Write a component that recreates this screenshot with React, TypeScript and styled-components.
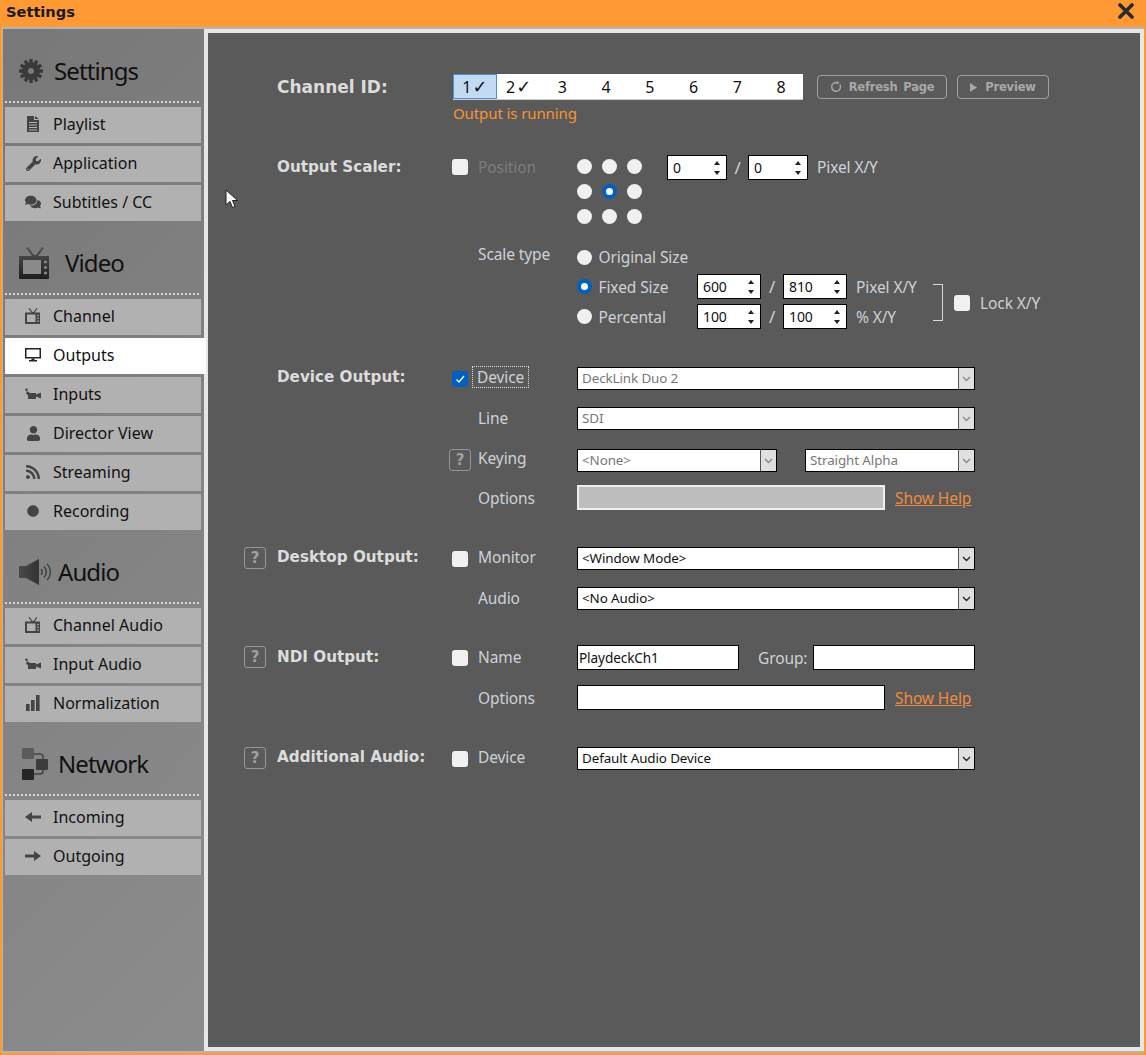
import React from "react";
import styled, { createGlobalStyle } from "styled-components";
import { FaWrench, FaComments, FaUser, FaRss, FaCircle } from "react-icons/fa";

const GlobalStyle = createGlobalStyle`
  html, body { margin: 0; padding: 0; background: #ff9933; }
  body { font-family: "Noto Sans", "Open Sans", sans-serif; }
`;

const Window = styled.div`
  position: relative;
  width: 1146px;
  height: 1055px;
  background: #ff9933;
  display: flex;
  flex-direction: column;
  overflow: hidden;
`;

const TitleBar = styled.div`
  height: 27px;
  display: flex;
  align-items: center;
  justify-content: space-between;
  padding: 0 12px 5px 6px;
  box-sizing: border-box;
  font: bold 14.6px "DejaVu Sans", sans-serif;
  color: #1a1a1a;
`;

const Body = styled.div`
  display: flex;
  height: 1022px;
  margin: 0 2px 2px 2px;
  border-top: 2px solid #b4b4b4;
  border-bottom: 2px solid #b4b4b4;
  box-sizing: content-box;
`;

const Sidebar = styled.div`
  width: 202px;
  flex: none;
  box-sizing: border-box;
  padding-left: 2px;
  background: linear-gradient(135deg, #787878, #8c8c8c);
  border-left: 1px solid #b4b4b4;
`;

const Heading = styled.div<{ $left?: number }>`
  height: 72px;
  box-sizing: border-box;
  padding: 12px 0 0 ${(p) => p.$left ?? 14}px;
  display: flex;
  align-items: center;
  color: #111;
  font-size: 24px;
  letter-spacing: -0.9px;
`;

const HeadLabel = styled.span`
  margin-top: -2px;
`;

const HeadIcon = styled.span<{ $gap: number }>`
  display: flex;
  margin-right: ${(p) => p.$gap}px;
  color: #333;
`;

const Dotted = styled.div`
  height: 2px;
  margin-right: 3px;
  margin-bottom: 4px;
  background-image: repeating-linear-gradient(90deg, #d8d8d8 0 2px, transparent 2px 4px);
`;

const Item = styled.div<{ $active?: boolean }>`
  height: 36px;
  margin-bottom: 3px;
  box-sizing: border-box;
  width: ${(p) => (p.$active ? 201 : 196)}px;
  background: ${(p) => (p.$active ? "#fff" : "#b1b1b1")};
  display: flex;
  align-items: center;
  padding: 0 0 2px 20px;
  font-size: 16px;
  color: #111;
  position: relative;

  &:last-child {
    margin-bottom: 0;
  }
`;

const ItemIcon = styled.span`
  width: 16px;
  height: 16px;
  margin-right: 12px;
  display: flex;
  align-items: center;
  justify-content: center;
  color: #444;
`;

const Panel = styled.div`
  flex: 1;
  border: 4px solid #e6e6e6;
  background: #5a5a5a;
  padding: 41px 0 0 36px;
  box-sizing: border-box;
  color: #ccd2d8;
  font-size: 15.5px;
  letter-spacing: -0.1px;
`;

const Row = styled.div<{ $h?: number; $top?: number }>`
  display: flex;
  align-items: center;
  height: ${(p) => p.$h ?? 23}px;
  margin-top: ${(p) => p.$top ?? 0}px;
`;

const HelpSlot = styled.div`
  width: 33px;
  flex: none;
`;

const Title = styled.div<{ $pad?: number }>`
  width: 176px;
  flex: none;
  padding-bottom: ${(p) => p.$pad ?? 4}px;
  font: bold 15.2px "DejaVu Sans", sans-serif;
  letter-spacing: 0;
  color: #dcdcdc;
`;

const BigTitle = styled(Title)`
  font-size: 17px;
`;

const CheckSlot = styled.div`
  width: 25px;
  flex: none;
  display: flex;
`;

const Sub = styled.div<{ $muted?: boolean; $raise?: number }>`
  width: 99px;
  flex: none;
  margin-top: ${(p) => -(p.$raise ?? 0)}px;
  color: ${(p) => (p.$muted ? "#7c7c7c" : "#ccd2d8")};
`;

const Focused = styled.span`
  display: inline-block;
  margin-left: -5px;
  padding: 0 4px;
  line-height: 20px;
  outline: 1px dotted #ddd;
`;

const Help = styled.div<{ $shift?: boolean }>`
  width: 22px;
  height: 22px;
  box-sizing: border-box;
  border: 1px solid #969696;
  border-radius: 3px;
  margin: ${(p) => (p.$shift ? "-2px 0 0 -4px" : "-2px 0 0 0")};
  display: flex;
  align-items: center;
  justify-content: center;
  color: #a0a0a0;
  font: bold 15px "DejaVu Sans", sans-serif;
`;

const Check = styled.div<{ $on?: boolean }>`
  width: 16px;
  height: 16px;
  margin-left: -1px;
  border-radius: 3px;
  background: ${(p) => (p.$on ? "#0060c0" : "#f0f0f0")};
  display: flex;
  align-items: center;
  justify-content: center;
`;

const Strip = styled.div`
  width: 350px;
  height: 26px;
  display: grid;
  grid-template-columns: repeat(8, 1fr);
  background: #fff;
  border-bottom: 1px solid #ccc;
  box-sizing: border-box;
  color: #111;
  font-size: 16px;
`;

const Cell = styled.div<{ $on?: boolean }>`
  display: flex;
  align-items: center;
  justify-content: center;
  box-sizing: border-box;
  background: ${(p) => (p.$on ? "#c3daf3" : "transparent")};
  border: ${(p) => (p.$on ? "1px solid #4a90d9" : "none")};
`;

const Tick = styled.span`
  font: 18px "DejaVu Sans", sans-serif;
  margin-left: 1px;
`;

const TopButton = styled.div<{ $w: number; $left: number }>`
  width: ${(p) => p.$w}px;
  margin-left: ${(p) => p.$left}px;
  height: 24px;
  box-sizing: border-box;
  border: 1px solid #a0a0a0;
  border-radius: 4px;
  display: flex;
  align-items: center;
  justify-content: center;
  gap: 7px;
  color: #a8a8a8;
  font: bold 11.5px "DejaVu Sans", sans-serif;
  letter-spacing: -0.2px;
  word-spacing: 2px;
`;

const Status = styled.div`
  height: 28px;
  line-height: 27px;
  padding-left: 209px;
  font-size: 15px;
  color: #f59532;
`;

const ScalerRow = styled.div`
  display: flex;
  margin-top: 27px;
  height: 69px;
`;

const ScalerCell = styled.div`
  height: 24px;
  display: flex;
  align-items: center;
`;

const Dots = styled.div`
  display: grid;
  grid-template-columns: repeat(3, 15px);
  grid-auto-rows: 15px;
  gap: 10px;
  margin-top: 4px;
  height: 65px;
`;

const Radio = styled.div<{ $on?: boolean }>`
  width: 15px;
  height: 15px;
  flex: none;
  box-sizing: border-box;
  border-radius: 50%;
  background: ${(p) => (p.$on ? "#fff" : "#f0f0f0")};
  border: ${(p) => (p.$on ? "4px solid #0060c0" : "none")};
`;

const Spin = styled.div<{ $w: number; $left?: number }>`
  position: relative;
  width: ${(p) => p.$w}px;
  height: 25px;
  margin-left: ${(p) => p.$left ?? 0}px;
  flex: none;
  box-sizing: border-box;
  border: 1px solid #000;
  background: #fff;
  color: #111;
  font-size: 14px;
  line-height: 23px;
  padding-left: 5px;
`;

const SpinUp = styled.i`
  position: absolute;
  right: 6px;
  top: 5px;
  border: 3px solid transparent;
  border-top: 0;
  border-bottom: 4px solid #222;
`;

const SpinDown = styled(SpinUp)`
  top: auto;
  bottom: 4px;
  border-bottom: 0;
  border-top: 4px solid #222;
`;

const Slash = styled.span<{ $w: number }>`
  width: ${(p) => p.$w}px;
  flex: none;
  text-align: center;
  font-size: 17px;
`;

const ScaleBlock = styled.div`
  display: flex;
  margin-top: 22px;
  height: 83px;
`;

const ScaleLabel = styled(Sub)`
  line-height: 16px;
`;

const Spacer = styled.div`
  width: 234px;
  flex: none;
`;

const ScaleRows = styled.div`
  width: 356px;
  flex: none;
`;

const ScaleRow = styled.div<{ $h: number; $top?: number }>`
  display: flex;
  align-items: center;
  height: ${(p) => p.$h}px;
  margin-top: ${(p) => p.$top ?? 0}px;
`;

const RadioText = styled.span`
  width: 105px;
  flex: none;
  padding-left: 6.5px;
  box-sizing: border-box;
  white-space: nowrap;
`;

const Unit = styled.span`
  margin-left: 9px;
`;

const Lock = styled.div`
  display: flex;
  align-items: center;
  margin-top: 38px;
  height: 37px;
`;

const Bracket = styled.div`
  width: 10px;
  height: 37px;
  box-sizing: border-box;
  border: 1px solid #d8d8d8;
  border-left: 0;
  margin-right: 12px;
`;

const LockText = styled.span`
  margin-left: 10px;
`;

const Select = styled.div<{ $w: number; $off?: boolean; $left?: number }>`
  width: ${(p) => p.$w}px;
  height: 23px;
  margin-left: ${(p) => p.$left ?? 0}px;
  flex: none;
  box-sizing: border-box;
  border: 1px solid #000;
  background: #fff;
  color: ${(p) => (p.$off ? "#777" : "#111")};
  font-size: 13.4px;
  line-height: 21px;
  padding-left: 4px;
  position: relative;
`;

const Arrow = styled.span<{ $off?: boolean }>`
  position: absolute;
  right: 0;
  top: 0;
  bottom: 0;
  width: 15px;
  background: #e0e0e0;
  border-left: 1px solid #555;
  display: flex;
  align-items: center;
  justify-content: center;
  color: ${(p) => (p.$off ? "#888" : "#222")};
`;

const TextBox = styled.div<{ $w: number; $off?: boolean }>`
  width: ${(p) => p.$w}px;
  height: 25px;
  flex: none;
  box-sizing: border-box;
  border: ${(p) => (p.$off ? "2px solid #eee" : "1px solid #000")};
  background: ${(p) => (p.$off ? "#bdbdbd" : "#fff")};
  color: #111;
  font-size: 13.6px;
  line-height: 23px;
  padding-left: 1px;
`;

const HelpLink = styled.span`
  margin-left: 10px;
  color: #f08a3c;
  text-decoration: underline;
`;

const GroupLabel = styled.span`
  width: 74px;
  flex: none;
  box-sizing: border-box;
  padding-left: 19px;
`;

const PositionedCursor = styled.svg`
  position: absolute;
  left: 225px;
  top: 189px;
`;

const GearIcon = () => (
  <svg width="24" height="24" viewBox="0 0 24 24" fill="#3a3a3a">
    {[0, 30, 60, 90, 120, 150, 180, 210, 240, 270, 300, 330].map((a) => (
      <rect key={a} x="10.300" y="0" width="3.400" height="5" rx="0.600" transform={`rotate(${a} 12 12)`} />
    ))}
    <path
      fillRule="evenodd"
      d="M12 3a9 9 0 1 1 0 18 9 9 0 0 1 0-18zm0 6a3 3 0 1 0 0 6 3 3 0 0 0 0-6z"
    />
  </svg>
);

const TvIcon = ({ size = 16 }: { size?: number }) => (
  <svg width={size} height={size} viewBox="0 0 32 32" fill="currentColor">
    <path d="M7 1l2-1 6 8h2l6-8 2 1-6 8h11v22a1 1 0 0 1-1 1H1a1 1 0 0 1-1-1V9h13z" />
    <rect x="4" y="13" width="17" height="15" fill="#b1b1b1" />
    <circle cx="26" cy="15" r="1.7" fill="#b1b1b1" />
    <circle cx="26" cy="20.5" r="1.7" fill="#b1b1b1" />
    <circle cx="26" cy="26" r="1.7" fill="#b1b1b1" />
  </svg>
);

const HeadTv = () => (
  <svg width="32" height="32" viewBox="0 0 32 32">
    <defs>
      <linearGradient id="tvg" x1="0" y1="0" x2="0" y2="1">
        <stop offset="0" stopColor="#555" />
        <stop offset="1" stopColor="#1e1e1e" />
      </linearGradient>
    </defs>
    <path fill="url(#tvg)" d="M7 1l2-1 6 8h2l6-8 2 1-6 8h11v22a1 1 0 0 1-1 1H1a1 1 0 0 1-1-1V9h13z" />
    <rect x="4" y="13" width="18" height="14" fill="#8a8a8a" />
    <circle cx="26.5" cy="15" r="1.6" fill="#888" />
    <circle cx="26.5" cy="20.5" r="1.6" fill="#888" />
    <circle cx="26.5" cy="26" r="1.6" fill="#888" />
  </svg>
);

const FileIcon = () => (
  <svg width="12" height="16" viewBox="0 0 12 16" fill="currentColor">
    <path d="M0 0h7v4h5v12H0zM8 0l4 3H8z" />
    <path d="M2 6.5h8M2 9h8M2 11.500h8M2 14h8" stroke="#b1b1b1" strokeWidth="1" />
  </svg>
);

const MonitorIcon = () => (
  <svg width="16" height="16" viewBox="0 0 16 16" fill="#222">
    <path fillRule="evenodd" d="M0 1h16v10.500H0zM1.500 2.500v7.500h13V2.500z" />
    <path d="M6.500 11.500h3V13h2.500v1.500H4V13h2.500z" />
  </svg>
);

const CameraIcon = () => (
  <svg width="16" height="12" viewBox="0 0 16 12" fill="currentColor">
    <circle cx="1.500" cy="1.800" r="1.300" />
    <path d="M2 3l3 2h6v1.500l5-2v6l-5-2V11H3V7L1 6z" />
  </svg>
);

const BarsIcon = () => (
  <svg width="14" height="16" viewBox="0 0 14 16" fill="currentColor">
    <rect x="0" y="9" width="3.600" height="7" />
    <rect x="5" y="5" width="3.600" height="11" />
    <rect x="10" y="0" width="3.600" height="16" />
  </svg>
);

const ArrowIcon = ({ flip }: { flip?: boolean }) => (
  <svg width="16" height="10" viewBox="0 0 16 10" fill="currentColor">
    <path d={flip ? "M0 3.500h9V0l7 5-7 5V6.500H0z" : "M16 3.500H7V0L0 5l7 5V6.500h9z"} />
  </svg>
);

const SpeakerIcon = () => (
  <svg width="32" height="26" viewBox="0 0 32 26">
    <defs>
      <linearGradient id="spk" x1="0" y1="0" x2="1" y2="0">
        <stop offset="0" stopColor="#4a4a4a" />
        <stop offset="1" stopColor="#333" />
      </linearGradient>
    </defs>
    <path fill="url(#spk)" d="M0 7h7l13-7v26L7 19H0z" />
    <path d="M22 10c1.500 1.500 1.500 4.500 0 6M25 7.500c3 3 3 8 0 11M28 5c4.500 4 4.500 12 0 16" fill="none" stroke="#444" strokeWidth="1.600" />
  </svg>
);

const NetworkIcon = () => (
  <svg width="26" height="32" viewBox="0 0 26 32">
    <path d="M12 6h6a3 3 0 0 1 3 3v3M12 26h6a3 3 0 0 0 3-3v-3" fill="none" stroke="#444" strokeWidth="1.500" />
    <rect x="0" y="0" width="12" height="11" rx="1" fill="#5c5c5c" />
    <rect x="14" y="11" width="12" height="11" rx="1" fill="#3c3c3c" />
    <rect x="0" y="21" width="12" height="11" rx="1" fill="#262626" />
  </svg>
);

const CheckMark = () => (
  <svg width="10" height="10" viewBox="0 0 10 10">
    <path d="M1.500 5.500l2.500 2.500 5-6" fill="none" stroke="#fff" strokeWidth="1.200" />
  </svg>
);

const Chevron = () => (
  <svg width="9" height="6" viewBox="0 0 9 6">
    <path d="M1 1l3.500 3.500L8 1" fill="none" stroke="currentColor" strokeWidth="1.400" />
  </svg>
);

const CloseIcon = () => (
  <svg width="16" height="16" viewBox="0 0 16 16">
    <path d="M2 2l12 12M14 2L2 14" stroke="#2a2a2a" strokeWidth="3.600" strokeLinecap="round" />
  </svg>
);

const RefreshIcon = () => (
  <svg width="12" height="12" viewBox="0 0 12 12">
    <path d="M9.800 3.500a4.400 4.400 0 1 1-2.300-1.800" fill="none" stroke="#a8a8a8" strokeWidth="1.500" />
    <path d="M6.500 0l3 1.800-3 1.800z" fill="#a8a8a8" />
  </svg>
);

const PlayIcon = () => (
  <svg width="8" height="9" viewBox="0 0 8 9">
    <path d="M0 0l7 4.500L0 9z" fill="#a8a8a8" />
  </svg>
);

const menu: { head: string; icon: React.ReactNode; left?: number; gap: number; items: [string, React.ReactNode][] }[] = [
  {
    head: "Settings",
    icon: <GearIcon />,
    gap: 11,
    items: [
      ["Playlist", <FileIcon />],
      ["Application", <FaWrench size={15} />],
      ["Subtitles / CC", <FaComments size={16} />],
    ],
  },
  {
    head: "Video",
    icon: <HeadTv />,
    gap: 14,
    items: [
      ["Channel", <TvIcon />],
      ["Outputs", <MonitorIcon />],
      ["Inputs", <CameraIcon />],
      ["Director View", <FaUser size={15} />],
      ["Streaming", <FaRss size={16} />],
      ["Recording", <FaCircle size={12} />],
    ],
  },
  {
    head: "Audio",
    icon: <SpeakerIcon />,
    gap: 7,
    items: [
      ["Channel Audio", <TvIcon />],
      ["Input Audio", <CameraIcon />],
      ["Normalization", <BarsIcon />],
    ],
  },
  {
    head: "Network",
    icon: <NetworkIcon />,
    left: 17,
    gap: 10,
    items: [
      ["Incoming", <ArrowIcon />],
      ["Outgoing", <ArrowIcon flip />],
    ],
  },
];

const channels = [
  { n: "1", done: true },
  { n: "2", done: true },
  { n: "3" },
  { n: "4" },
  { n: "5" },
  { n: "6" },
  { n: "7" },
  { n: "8" },
];

const SpinBox = ({ value, w, left }: { value: string; w: number; left?: number }) => (
  <Spin $w={w} $left={left}>
    {value}
    <SpinUp />
    <SpinDown />
  </Spin>
);

const Drop = ({ text, w, off, left }: { text: string; w: number; off?: boolean; left?: number }) => (
  <Select $w={w} $off={off} $left={left}>
    {text}
    <Arrow $off={off}>
      <Chevron />
    </Arrow>
  </Select>
);

const App = () => {
  return (
    <Window>
      <GlobalStyle />
      <TitleBar>
        Settings
        <CloseIcon />
      </TitleBar>
      <Body>
        <Sidebar>
          {menu.map((group) => (
            <div key={group.head}>
              <Heading $left={group.left}>
                <HeadIcon $gap={group.gap}>{group.icon}</HeadIcon>
                <HeadLabel>{group.head}</HeadLabel>
              </Heading>
              <Dotted />
              {group.items.map(([label, icon]) => (
                <Item key={label} $active={label === "Outputs"}>
                  <ItemIcon>{icon}</ItemIcon>
                  {label}
                </Item>
              ))}
            </div>
          ))}
        </Sidebar>

        <Panel>
          <Row $h={26}>
            <HelpSlot />
            <BigTitle $pad={1}>Channel ID:</BigTitle>
            <Strip>
              {channels.map((c, i) => (
                <Cell key={c.n} $on={i === 0}>
                  {c.n}
                  {c.done && <Tick>✓</Tick>}
                </Cell>
              ))}
            </Strip>
            <TopButton $w={130} $left={14}>
              <RefreshIcon />
              Refresh Page
            </TopButton>
            <TopButton $w={92} $left={10}>
              <PlayIcon />
              Preview
            </TopButton>
          </Row>
          <Status>Output is running</Status>

          <ScalerRow>
            <HelpSlot />
            <Title as={ScalerCell} $pad={2}>
              Output Scaler:
            </Title>
            <CheckSlot as={ScalerCell}>
              <Check />
            </CheckSlot>
            <Sub as={ScalerCell} $muted>
              Position
            </Sub>
            <Dots>
              {[0, 1, 2, 3, 4, 5, 6, 7, 8].map((n) => (
                <Radio key={n} $on={n === 4} />
              ))}
            </Dots>
            <ScalerCell>
              <SpinBox value="0" w={60} left={25} />
              <Slash $w={21}>/</Slash>
              <SpinBox value="0" w={60} />
              <Unit>Pixel X/Y</Unit>
            </ScalerCell>
          </ScalerRow>

          <ScaleBlock>
            <Spacer />
            <ScaleLabel>Scale type</ScaleLabel>
            <ScaleRows>
              <ScaleRow $h={22}>
                <Radio />
                <RadioText>Original Size</RadioText>
              </ScaleRow>
              <ScaleRow $h={25} $top={6}>
                <Radio $on />
                <RadioText>Fixed Size</RadioText>
                <SpinBox value="600" w={64} />
                <Slash $w={22}>/</Slash>
                <SpinBox value="810" w={64} />
                <Unit>Pixel X/Y</Unit>
              </ScaleRow>
              <ScaleRow $h={25} $top={5}>
                <Radio />
                <RadioText>Percental</RadioText>
                <SpinBox value="100" w={64} />
                <Slash $w={22}>/</Slash>
                <SpinBox value="100" w={64} />
                <Unit>% X/Y</Unit>
              </ScaleRow>
            </ScaleRows>
            <Lock>
              <Bracket />
              <Check />
              <LockText>Lock X/Y</LockText>
            </Lock>
          </ScaleBlock>

          <Row $top={38}>
            <HelpSlot />
            <Title>Device Output:</Title>
            <CheckSlot>
              <Check $on>
                <CheckMark />
              </Check>
            </CheckSlot>
            <Sub $raise={3}>
              <Focused>Device</Focused>
            </Sub>
            <Drop text="DeckLink Duo 2" w={398} off />
          </Row>
          <Row $top={17}>
            <HelpSlot />
            <Title />
            <CheckSlot />
            <Sub $raise={2}>Line</Sub>
            <Drop text="SDI" w={398} off />
          </Row>
          <Row $top={19}>
            <HelpSlot />
            <Title />
            <CheckSlot>
              <Help $shift>?</Help>
            </CheckSlot>
            <Sub $raise={5}>Keying</Sub>
            <Drop text="<None>" w={200} off />
            <Drop text="Straight Alpha" w={170} off left={28} />
          </Row>
          <Row $h={25} $top={13}>
            <HelpSlot />
            <Title />
            <CheckSlot />
            <Sub>Options</Sub>
            <TextBox $w={308} $off />
            <HelpLink>Show Help</HelpLink>
          </Row>

          <Row $top={37}>
            <HelpSlot>
              <Help>?</Help>
            </HelpSlot>
            <Title>Desktop Output:</Title>
            <CheckSlot>
              <Check />
            </CheckSlot>
            <Sub $raise={4}>Monitor</Sub>
            <Drop text="<Window Mode>" w={398} />
          </Row>
          <Row $top={17}>
            <HelpSlot />
            <Title />
            <CheckSlot />
            <Sub $raise={2}>Audio</Sub>
            <Drop text="<No Audio>" w={398} />
          </Row>

          <Row $h={25} $top={35}>
            <HelpSlot>
              <Help>?</Help>
            </HelpSlot>
            <Title $pad={2}>NDI Output:</Title>
            <CheckSlot>
              <Check />
            </CheckSlot>
            <Sub $raise={2}>Name</Sub>
            <TextBox $w={162}>PlaydeckCh1</TextBox>
            <GroupLabel>Group:</GroupLabel>
            <TextBox $w={162} />
          </Row>
          <Row $h={25} $top={15}>
            <HelpSlot />
            <Title />
            <CheckSlot />
            <Sub>Options</Sub>
            <TextBox $w={308} />
            <HelpLink>Show Help</HelpLink>
          </Row>

          <Row $top={37}>
            <HelpSlot>
              <Help>?</Help>
            </HelpSlot>
            <Title>Additional Audio:</Title>
            <CheckSlot>
              <Check />
            </CheckSlot>
            <Sub $raise={4}>Device</Sub>
            <Drop text="Default Audio Device" w={398} />
          </Row>
        </Panel>
      </Body>
      <PositionedCursor width="13" height="20" viewBox="0 0 13 20">
        <path d="M1 1v15l4-3.500 2.500 6 2.500-1-2.500-6H12.500z" fill="#fff" stroke="#222" strokeWidth="1" />
      </PositionedCursor>
    </Window>
  );
};

export default App;
